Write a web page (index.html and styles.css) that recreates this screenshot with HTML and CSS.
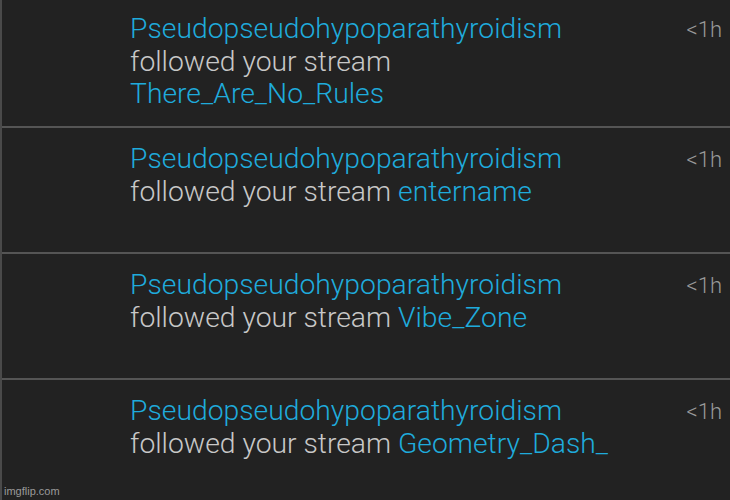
FILE: index.html
```html
<!DOCTYPE html>
<html>
<head>
<meta charset="utf-8">
<link rel="stylesheet" href="styles.css">
</head>
<body>
<div class="list">
  <div class="item">
    <div class="text">
      <div class="user">Pseudopseudohypoparathyroidism</div>
      <div class="msg">followed your stream <span class="stream">There_Are_No_Rules</span></div>
    </div>
    <div class="time">&lt;1h</div>
  </div>
  <div class="item">
    <div class="text">
      <div class="user">Pseudopseudohypoparathyroidism</div>
      <div class="msg">followed your stream <span class="stream">entername</span></div>
    </div>
    <div class="time">&lt;1h</div>
  </div>
  <div class="item">
    <div class="text">
      <div class="user">Pseudopseudohypoparathyroidism</div>
      <div class="msg">followed your stream <span class="stream">Vibe_Zone</span></div>
    </div>
    <div class="time">&lt;1h</div>
  </div>
  <div class="item last">
    <div class="text">
      <div class="user">Pseudopseudohypoparathyroidism</div>
      <div class="msg">followed your stream <span class="stream">Geometry_Dash_</span></div>
    </div>
    <div class="time">&lt;1h</div>
  </div>
  <div class="watermark">imgflip.com</div>
</div>
</body>
</html>
```
FILE: styles.css
```css
html, body {
  margin: 0;
  padding: 0;
  background: #222222;
}
body {
  width: 730px;
  height: 500px;
  overflow: hidden;
  font-family: Roboto, "Liberation Sans", sans-serif;
}
.list {
  position: relative;
  height: 500px;
  padding-top: 2px;
  border-left: 2px solid #4a4a4a;
  box-sizing: border-box;
}
.item {
  display: flex;
  justify-content: space-between;
  height: 126px;
  box-sizing: border-box;
  padding: 15px 8px 0 128px;
  border-bottom: 2px solid #555555;
}
.item:first-child {
  padding-top: 11px;
}
.item.last {
  border-bottom: none;
}
.text {
  width: 500px;
  font-size: 28.3px;
  font-weight: 300;
  line-height: 32.5px;
}
.user, .stream {
  color: #1fabdc;
}
.msg {
  color: #c8c8c8;
}
.time {
  width: 60px;
  text-align: right;
  color: #999999;
  font-size: 22px;
  font-weight: 300;
  line-height: 32px;
  padding-top: 1px;
}
.watermark {
  position: absolute;
  left: 2px;
  bottom: 3px;
  font-size: 11px;
  color: #9a9a9a;
  font-family: "Liberation Sans", sans-serif;
}
```
